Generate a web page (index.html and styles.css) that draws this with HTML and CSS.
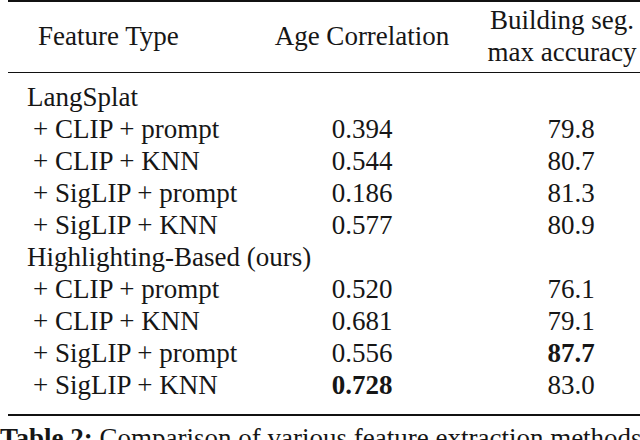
FILE: index.html
```html
<!DOCTYPE html>
<html>
<head>
<meta charset="utf-8">
<link rel="stylesheet" href="styles.css">
</head>
<body>
<div class="page">
  <table class="results">
    <colgroup>
      <col class="col-name">
      <col class="col-age">
      <col class="col-acc">
    </colgroup>
    <thead>
      <tr>
        <th class="c1 head-name">Feature Type</th>
        <th class="c2">Age Correlation</th>
        <th class="c3">Building seg.<br>max accuracy</th>
      </tr>
    </thead>
    <tbody>
      <tr class="first"><td class="c1 group">LangSplat</td><td class="c2"></td><td class="c3 val"></td></tr>
      <tr><td class="c1 sub">+ CLIP + prompt</td><td class="c2">0.394</td><td class="c3 val">79.8</td></tr>
      <tr><td class="c1 sub">+ CLIP + KNN</td><td class="c2">0.544</td><td class="c3 val">80.7</td></tr>
      <tr><td class="c1 sub">+ SigLIP + prompt</td><td class="c2">0.186</td><td class="c3 val">81.3</td></tr>
      <tr><td class="c1 sub">+ SigLIP + KNN</td><td class="c2">0.577</td><td class="c3 val">80.9</td></tr>
      <tr><td class="c1 group">Highlighting-Based (ours)</td><td class="c2"></td><td class="c3 val"></td></tr>
      <tr><td class="c1 sub">+ CLIP + prompt</td><td class="c2">0.520</td><td class="c3 val">76.1</td></tr>
      <tr><td class="c1 sub">+ CLIP + KNN</td><td class="c2">0.681</td><td class="c3 val">79.1</td></tr>
      <tr><td class="c1 sub">+ SigLIP + prompt</td><td class="c2">0.556</td><td class="c3 val"><b>87.7</b></td></tr>
      <tr class="last"><td class="c1 sub">+ SigLIP + KNN</td><td class="c2"><b>0.728</b></td><td class="c3 val">83.0</td></tr>
    </tbody>
  </table>
  <p class="caption"><b>Table 2:</b> Comparison of various feature extraction methods based on their correlation with building age</p>
</div>
</body>
</html>
```

FILE: styles.css
```css
html, body {
  margin: 0;
  padding: 0;
  background: #ffffff;
}

body {
  width: 640px;
  height: 440px;
  overflow: hidden;
  font-family: "Liberation Serif", "Times New Roman", serif;
  font-size: 27px;
  line-height: 32px;
  color: #161616;
}

.page {
  width: 640px;
}

.results {
  border-collapse: collapse;
  margin-left: 8px;
  table-layout: fixed;
  width: 657px;
  border-top: 2px solid #111;
  border-bottom: 2px solid #111;
}

.col-name { width: 257px; }
.col-age { width: 194px; }
.col-acc { width: 206px; }

.results th,
.results td {
  box-sizing: border-box;
  padding: 0;
  font-weight: normal;
  white-space: nowrap;
}

.results thead tr {
  border-bottom: 1px solid #111;
}

.results th {
  padding-top: 2px;
  padding-bottom: 4px;
  vertical-align: middle;
}

.c1 {
  text-align: left;
}

.c2 {
  text-align: center;
}

.c3 {
  text-align: center;
}

.results td.val {
  padding-left: 18px;
}

.results .head-name {
  padding-left: 30px;
}

.results .group {
  padding-left: 19px;
}

.results .sub {
  padding-left: 25px;
}

.results tbody tr.first td {
  padding-top: 8px;
}

.results tbody tr.last td {
  padding-bottom: 13px;
}

.caption {
  margin: 6px 0 0 0;
  white-space: nowrap;
}
```
